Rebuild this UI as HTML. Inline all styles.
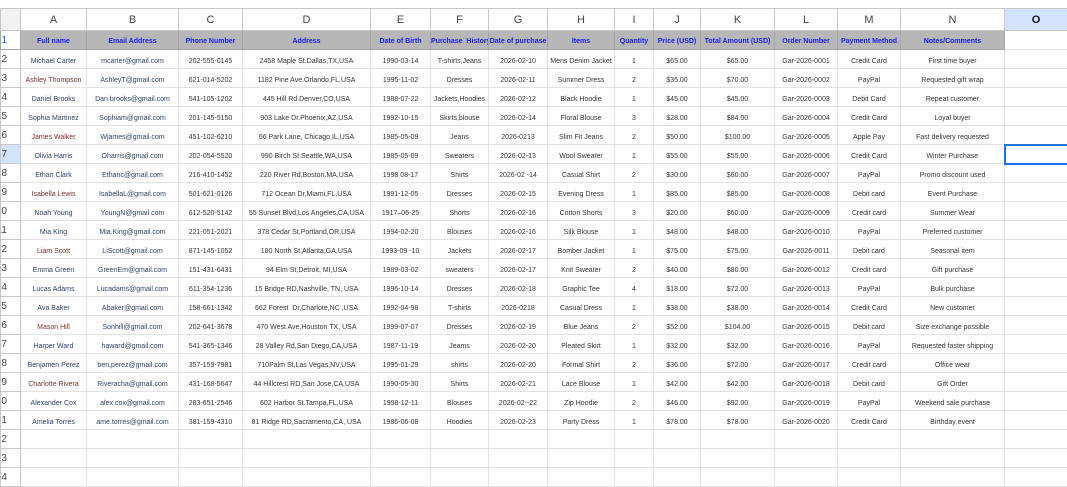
<!DOCTYPE html>
<html><head><meta charset="utf-8"><style>
html,body{margin:0;padding:0;background:#fff;width:1067px;height:473px;overflow:hidden}
body{font-family:"Liberation Sans",Arial,sans-serif}
table{position:absolute;left:0;top:8px;border-collapse:collapse;table-layout:fixed;width:1067px}
td{padding:0;border:1px solid #e2e2e2;height:19px;font-size:7px;color:#333;text-align:center;white-space:nowrap;overflow:hidden;vertical-align:bottom;padding-bottom:3px;box-sizing:border-box}
tr.cl td{height:22px;font-size:11px;color:#444;border-color:#c7c7c7;padding-bottom:0;vertical-align:middle}
tr.cl td.sel{background:#d3e3fd;color:#111;font-weight:bold}
tr.h td{background:#b7b7b7;color:#1a1aff;font-weight:bold;border-color:#a5a5a5;vertical-align:bottom;padding-bottom:4px}
tr.h td.o{background:#fff;border-color:#e2e2e2}
td.rn{font-size:10px;color:#444;text-align:right;padding-right:13px;border-color:#c7c7c7;overflow:hidden;text-overflow:clip;direction:rtl;vertical-align:middle;padding-bottom:0}
tr.h td.rn{background:#fff;color:#1a56db;font-weight:normal;vertical-align:middle;padding-bottom:0}
td.rsel{background:#d3e3fd}
td.cur{border:2px solid #1a73e8}
td.corner{background:#f1f1f1;border-color:#c7c7c7}
.e{color:#2b3f6b}.r{color:#7a2e2e}.b{color:#2b3f6b}
</style></head><body>
<table>
<colgroup><col style="width:20px"><col style="width:66px"><col style="width:92px"><col style="width:64px"><col style="width:128px"><col style="width:60px"><col style="width:58px"><col style="width:59px"><col style="width:67px"><col style="width:39px"><col style="width:47px"><col style="width:74px"><col style="width:63px"><col style="width:63px"><col style="width:104px"><col style="width:63px"></colgroup>
<tr class="cl"><td class="corner"></td><td>A</td><td>B</td><td>C</td><td>D</td><td>E</td><td>F</td><td>G</td><td>H</td><td>I</td><td>J</td><td>K</td><td>L</td><td>M</td><td>N</td><td class="sel">O</td></tr>
<tr class="h"><td class="rn">1</td><td>Full name</td><td>Email Address</td><td>Phone Number</td><td>Address</td><td>Date of Birth</td><td style="text-align:left">Purchase&nbsp; History</td><td>Date of purchase</td><td>Items</td><td>Quantity</td><td>Price (USD)</td><td>Total Amount (USD)</td><td>Order Number</td><td>Payment Method</td><td>Notes/Comments</td><td class="o"></td></tr>
<tr><td class="rn">2</td><td class="b">Michael Carter</td><td class="e">mcarter@gmail.com</td><td>202-555-0145</td><td>2458 Maple St.Dallas,TX,USA</td><td>1990-03-14</td><td>T-shirts,Jeans</td><td>2026-02-10</td><td>Mens Denim Jacket</td><td>1</td><td>$65.00</td><td>$65.00</td><td>Gar-2026-0001</td><td>Credit Card</td><td>First time buyer</td><td></td></tr>
<tr><td class="rn">3</td><td class="r">Ashley Thompson</td><td class="e">AshleyT@gmail.com</td><td>621-014-5202</td><td>1182 Pine Ave.Orlando,FL,USA</td><td>1995-11-02</td><td>Dresses</td><td>2026-02-11</td><td>Summer Dress</td><td>2</td><td>$35.00</td><td>$70.00</td><td>Gar-2026-0002</td><td>PayPal</td><td>Requested gift wrap</td><td></td></tr>
<tr><td class="rn">4</td><td class="b">Daniel Brooks</td><td class="e">Dan.brooks@gmail.com</td><td>541-105-1202</td><td>445 Hill Rd.Denver,CO,USA</td><td>1988-07-22</td><td>Jackets,Hoodies</td><td>2026-02-12</td><td>Black Hoodie</td><td>1</td><td>$45.00</td><td>$45.00</td><td>Gar-2026-0003</td><td>Debit Card</td><td>Repeat customer</td><td></td></tr>
<tr><td class="rn">5</td><td class="b">Sophia Martinez</td><td class="e">Sophiam@gmail.com</td><td>201-145-5150</td><td>903 Lake Dr.Phoenix,AZ,USA</td><td>1992-10-15</td><td>Skirts,blouse</td><td>2026-02-14</td><td>Floral Blouse</td><td>3</td><td>$28.00</td><td>$84.00</td><td>Gar-2026-0004</td><td>Credit Card</td><td>Loyal buyer</td><td></td></tr>
<tr><td class="rn">6</td><td class="r">James Walker</td><td class="e">Wjames@gmail.com</td><td>451-102-6210</td><td>66 Park Lane, Chicago,IL,USA</td><td>1985-05-09</td><td>Jeans</td><td>2026-0213</td><td>Slim Fit Jeans</td><td>2</td><td>$50.00</td><td>$100.00</td><td>Gar-2026-0005</td><td>Apple Pay</td><td>Fast delivery requested</td><td></td></tr>
<tr><td class="rn rsel">7</td><td class="b">Olivia Harris</td><td class="e">Oharris@gmail.com</td><td>202-054-5520</td><td>990 Birch St.Seattle,WA,USA</td><td>1985-05-09</td><td>Sweaters</td><td>2026-02-13</td><td>Wool Sweater</td><td>1</td><td>$55.00</td><td>$55.00</td><td>Gar-2026-0006</td><td>Credit Card</td><td>Winter Purchase</td><td class="cur"></td></tr>
<tr><td class="rn">8</td><td class="b">Ethan Clark</td><td class="e">Ethanc@gmail.com</td><td>216-410-1452</td><td>220 River Rd,Boston,MA,USA</td><td>1998 08-17</td><td>Shirts</td><td>2026-02 -14</td><td>Casual Shirt</td><td>2</td><td>$30.00</td><td>$60.00</td><td>Gar-2026-0007</td><td>PayPal</td><td>Promo discount used</td><td></td></tr>
<tr><td class="rn">9</td><td class="r">Isabella Lewis</td><td class="e">IsabellaL@gmail.com</td><td>501-621-0126</td><td>712 Ocean Dr,Miami,FL,USA</td><td>1991-12-05</td><td>Dresses</td><td>2026-02-15</td><td>Evening Dress</td><td>1</td><td>$85.00</td><td>$85.00</td><td>Gar-2026-0008</td><td>Debit card</td><td>Event Purchase</td><td></td></tr>
<tr><td class="rn">10</td><td class="b">Noah Young</td><td class="e">YoungN@gmail.com</td><td>612-520-5142</td><td>55 Sunset Blvd,Los Angeles,CA,USA</td><td>1917–06-25</td><td>Shorts</td><td>2026-02-16</td><td>Cotton Shorts</td><td>3</td><td>$20.00</td><td>$60.00</td><td>Gar-2026-0009</td><td>Credit card</td><td>Summer Wear</td><td></td></tr>
<tr><td class="rn">11</td><td class="b">Mia King</td><td class="e">Mia.King@gmail.com</td><td>221-051-2021</td><td>378 Cedar St,Portland,OR,USA</td><td>1994-02-20</td><td>Blouses</td><td>2026-02-16</td><td>Silk Blouse</td><td>1</td><td>$48.00</td><td>$48.00</td><td>Gar-2026-0010</td><td>PayPal</td><td>Preferred customer</td><td></td></tr>
<tr><td class="rn">12</td><td class="r">Liam Scott</td><td class="e">LiScott@gmail.com</td><td>871-145-1052</td><td>180 North St,Atlanta,GA,USA</td><td>1993-09 -10</td><td>Jackets</td><td>2026-02-17</td><td>Bomber Jacket</td><td>1</td><td>$75.00</td><td>$75.00</td><td>Gar-2026-0011</td><td>Debit card</td><td>Seasonal item</td><td></td></tr>
<tr><td class="rn">13</td><td class="b">Emma Green</td><td class="e">GreenEm@gmail.com</td><td>151-431-6431</td><td>94 Elm St,Detroit, MI,USA</td><td>1989-03-02</td><td>sweaters</td><td>2026-02-17</td><td>Knit Sweater</td><td>2</td><td>$40.00</td><td>$80.00</td><td>Gar-2026-0012</td><td>Credit card</td><td>Gift purchase</td><td></td></tr>
<tr><td class="rn">14</td><td class="b">Lucas Adams</td><td class="e">Lucadams@gmail.com</td><td>611-354-1236</td><td>15 Bridge RD,Nashville, TN, USA</td><td>1996-10-14</td><td>Dresses</td><td>2026-02-18</td><td>Graphic Tee</td><td>4</td><td>$18.00</td><td>$72.00</td><td>Gar-2026-0013</td><td>PayPal</td><td>Bulk purchase</td><td></td></tr>
<tr><td class="rn">15</td><td class="b">Ava Baker</td><td class="e">Abaker@gmail.com</td><td>158-661-1342</td><td>662 Forest&nbsp; Dr,Charlote,NC ,USA</td><td>1992-04-98</td><td>T-shirts</td><td>2026-0218</td><td>Casual Dress</td><td>1</td><td>$38.00</td><td>$38.00</td><td>Gar-2026-0014</td><td>Credit Card</td><td>New customer</td><td></td></tr>
<tr><td class="rn">16</td><td class="r">Mason Hill</td><td class="e">Sonhill@gmail.com</td><td>202-641-3678</td><td>470 West Ave,Houston TX, USA</td><td>1999-07-07</td><td>Dresses</td><td>2026-02-19</td><td>Blue Jeans</td><td>2</td><td>$52.00</td><td>$104.00</td><td>Gar-2026-0015</td><td>Debit card</td><td>Size exchange possible</td><td></td></tr>
<tr><td class="rn">17</td><td class="b">Harper Ward</td><td class="e">haward@gmail.com</td><td>541-365-1346</td><td>28 Valley Rd,San Diego,CA,USA</td><td>1987-11-19</td><td>Jeams</td><td>2026-02-20</td><td>Pleated Skirt</td><td>1</td><td>$32.00</td><td>$32.00</td><td>Gar-2026-0016</td><td>PayPal</td><td>Requested faster shipping</td><td></td></tr>
<tr><td class="rn">18</td><td class="b">Benjamen Perez</td><td class="e">ben.perez@gmail.com</td><td>357-159-7981</td><td>710Palm St,Las Vegas,NV,USA</td><td>1995-01-29</td><td>shirts</td><td>2026-02-20</td><td>Formal Shirt</td><td>2</td><td>$36.00</td><td>$72.00</td><td>Gar-2026-0017</td><td>Credit card</td><td>Office wear</td><td></td></tr>
<tr><td class="rn">19</td><td class="r">Charlotte Rivera</td><td class="e">Riveracha@gmail.com</td><td>431-168-5647</td><td>44 Hillcrest RD,San Jose,CA,USA</td><td>1990-05-30</td><td>Shirts</td><td>2026-02-21</td><td>Lace Blouse</td><td>1</td><td>$42.00</td><td>$42.00</td><td>Gar-2026-0018</td><td>Debit card</td><td>Gift Order</td><td></td></tr>
<tr><td class="rn">20</td><td class="b">Alexander Cox</td><td class="e">alex.cox@gmail.com</td><td>283-651-2546</td><td>602 Harbor St.Tampa,FL,USA</td><td>1998-12-11</td><td>Blouses</td><td>2026-02--22</td><td>Zip Hoodie</td><td>2</td><td>$46.00</td><td>$92.00</td><td>Gar-2026-0019</td><td>PayPal</td><td>Weekend sale purchase</td><td></td></tr>
<tr><td class="rn">21</td><td class="b">Amelia Torres</td><td class="e">ame.torres@gmail.com</td><td>381-159-4310</td><td>81 Ridge RD,Sacramento,CA, USA</td><td>1986-06-08</td><td>Hoodies</td><td>2026-02-23</td><td>Party Dress</td><td>1</td><td>$78.00</td><td>$78.00</td><td>Gar-2026-0020</td><td>Credit Card</td><td>Birthday event</td><td></td></tr>
<tr><td class="rn">22</td><td></td><td></td><td></td><td></td><td></td><td></td><td></td><td></td><td></td><td></td><td></td><td></td><td></td><td></td><td></td></tr>
<tr><td class="rn">23</td><td></td><td></td><td></td><td></td><td></td><td></td><td></td><td></td><td></td><td></td><td></td><td></td><td></td><td></td><td></td></tr>
<tr><td class="rn">24</td><td></td><td></td><td></td><td></td><td></td><td></td><td></td><td></td><td></td><td></td><td></td><td></td><td></td><td></td><td></td></tr>
</table>
</body></html>
